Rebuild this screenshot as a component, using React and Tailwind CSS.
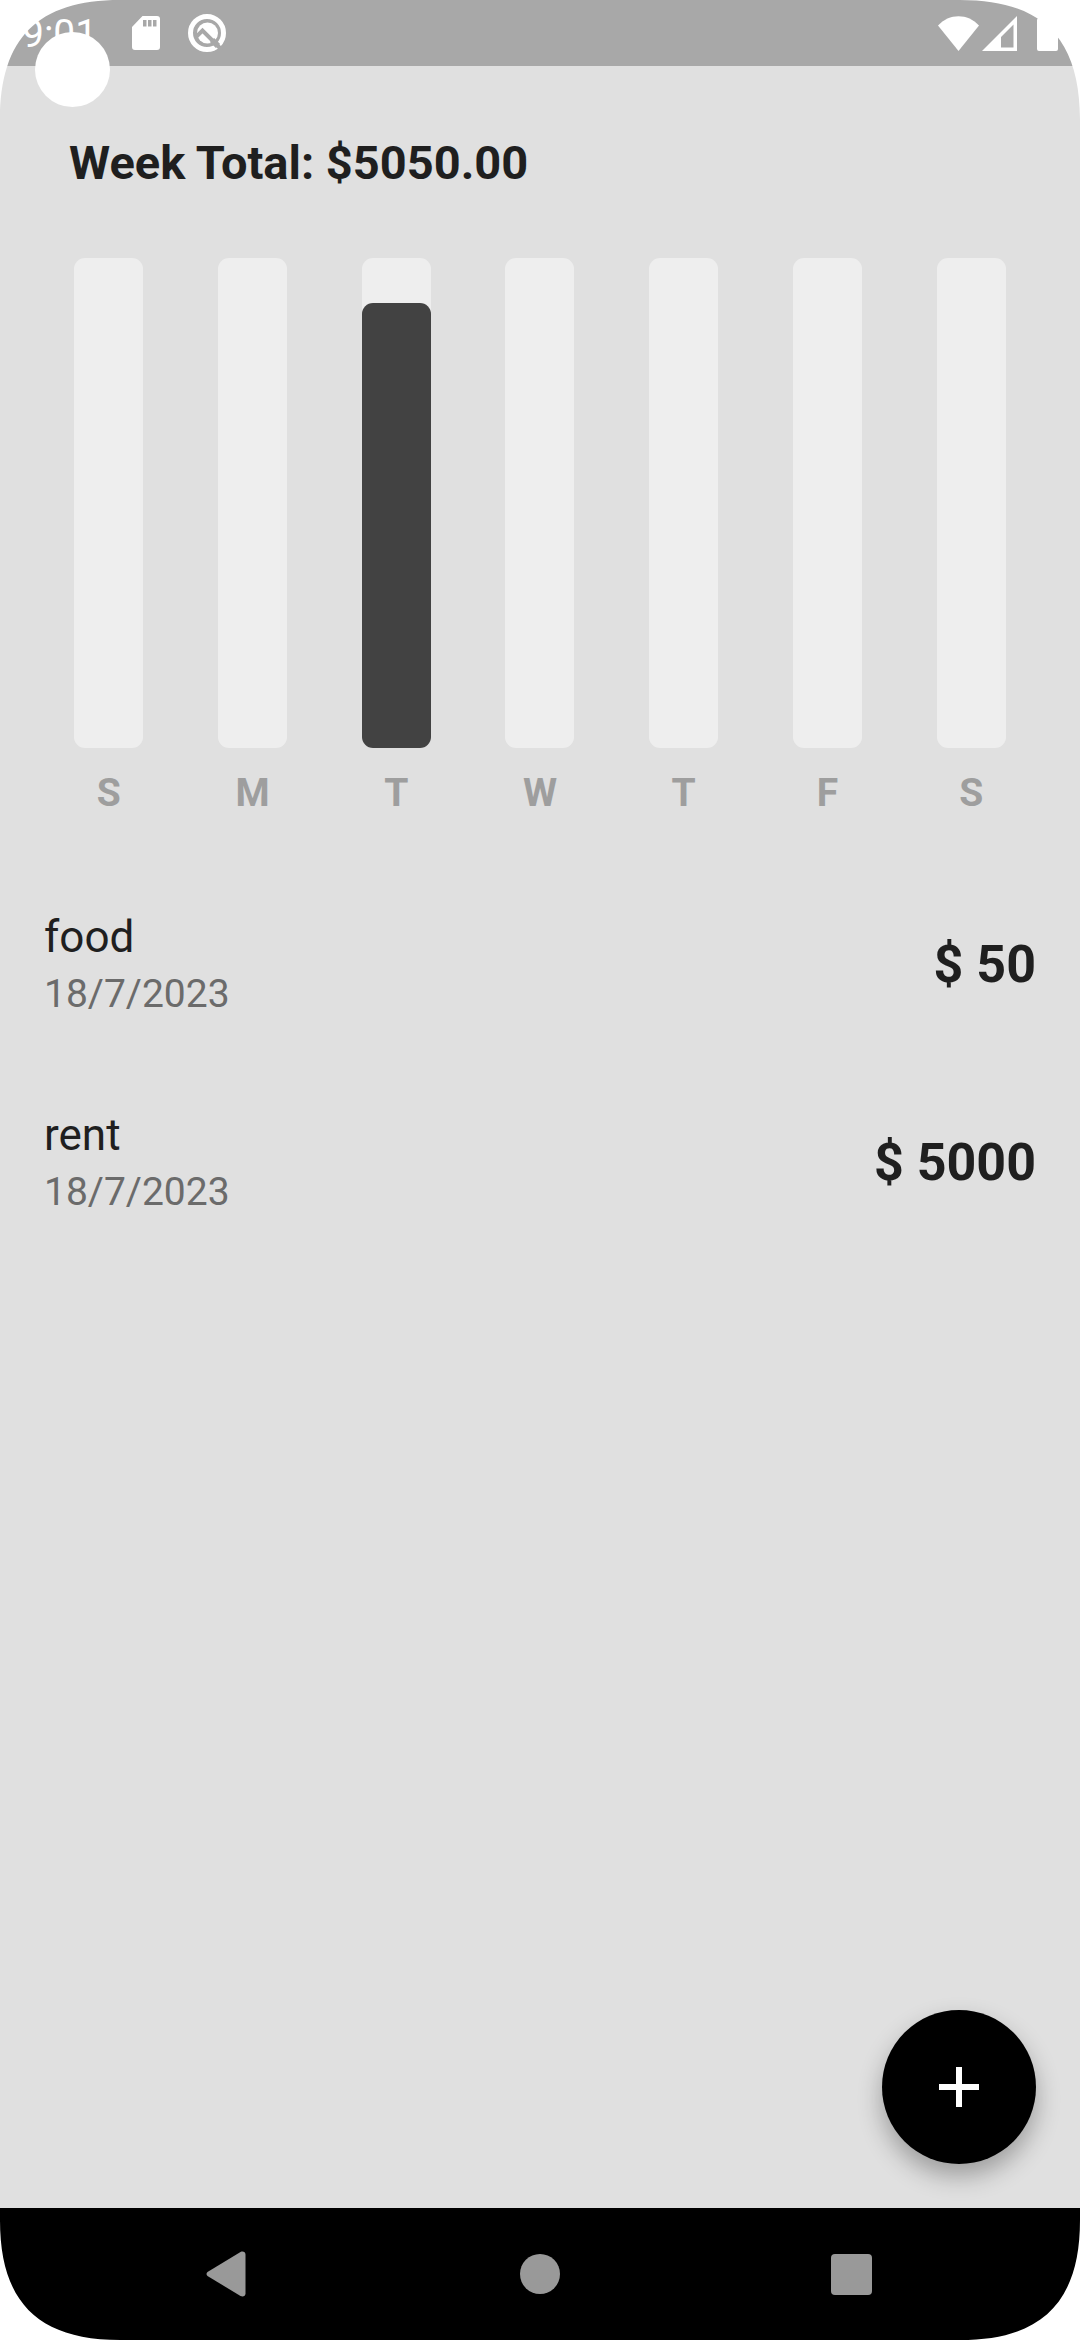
const days = [
  { label: "S", name: "Sunday", spent: 0 },
  { label: "M", name: "Monday", spent: 0 },
  { label: "T", name: "Tuesday", spent: 5000 },
  { label: "W", name: "Wednesday", spent: 0 },
  { label: "T", name: "Thursday", spent: 0 },
  { label: "F", name: "Friday", spent: 0 },
  { label: "S", name: "Saturday", spent: 0 },
];
const DAY_LIMIT = 5500;

const expenses = [
  { title: "food", date: "18/7/2023", amount: "$ 50" },
  { title: "rent", date: "18/7/2023", amount: "$ 5000" },
];

function StatusBar() {
  return (
    <header className="flex h-[66px] items-center bg-[#a8a8a8] pr-[22px] pl-[22px] text-white">
      <span className="w-[110px] pt-[2px] text-[39px] leading-[46px]">9:01</span>
      <svg className="h-[34px] w-[28px]" viewBox="0 0 28 34" fill="currentColor" aria-hidden="true">
        <path fillRule="evenodd" d="M10.5 0H25a3 3 0 0 1 3 3V31a3 3 0 0 1-3 3H3a3 3 0 0 1-3-3V11ZM11 4V10.500H14.500V4ZM16 4V10.500H19.500V4ZM21 4V10.500H24.500V4Z" />
      </svg>
      <svg className="ml-[28px] h-[38px] w-[38px]" viewBox="0 0 38 38" fill="none" aria-hidden="true">
        <circle cx="19" cy="19" r="16.500" stroke="currentColor" strokeWidth="5" />
        <circle cx="19.500" cy="19" r="10.500" fill="currentColor" />
        <path d="M7.500 23.500L14.500 16.500L34 36" stroke="#a8a8a8" strokeWidth="4" />
        <path d="M24 26L30 32" stroke="#a8a8a8" strokeWidth="6" />
      </svg>
      <div className="ml-auto flex items-center">
        <svg className="h-[35px] w-[41px]" viewBox="0 0 41 35" fill="currentColor" aria-hidden="true">
          <path d="M20.500 35L0 9.500C11-3 30-3 41 9.500Z" />
        </svg>
        <svg className="ml-[3px] h-[35px] w-[35px]" viewBox="0 0 35 35" fill="currentColor" aria-hidden="true">
          <path fillRule="evenodd" d="M35 0V35H0ZM31.500 8.500L19 21V31.500H31.500Z" />
        </svg>
        <svg className="ml-[20px] h-[36px] w-[21px]" viewBox="0 0 21 36" fill="currentColor" aria-hidden="true">
          <path d="M6 0H15V3H19a2 2 0 0 1 2 2V34a2 2 0 0 1-2 2H2a2 2 0 0 1-2-2V5a2 2 0 0 1 2-2H6Z" />
        </svg>
      </div>
    </header>
  );
}

function WeekChart() {
  return (
    <section className="px-[37px] pt-[69px]">
      <h1 className="pl-[32px] text-[47px] leading-[55px] font-bold">Week Total: $5050.00</h1>
      <ul className="mt-[68px] grid grid-cols-7">
        {days.map((day) => (
          <li key={day.name} className="flex flex-col items-center gap-[22px]">
            <div className="flex h-[490px] w-[69px] items-end rounded-[11px] bg-[#eeeeee]">
              <div
                className="w-full rounded-[11px] bg-[#424242]"
                style={{ height: `${(day.spent / DAY_LIMIT) * 100}%` }}
              />
            </div>
            <span className="text-[39px] leading-[46px] font-bold text-[#9e9e9e]">{day.label}</span>
          </li>
        ))}
      </ul>
    </section>
  );
}

function ExpenseList() {
  return (
    <ul className="mt-[49px]">
      {expenses.map((item) => (
        <li key={item.title} className="flex h-[198px] items-center justify-between px-[44px]">
          <div className="flex flex-col gap-[8px]">
            <span className="text-[44px] leading-[52px]">{item.title}</span>
            <span className="text-[39px] leading-[46px] text-[#6b6b6b]">{item.date}</span>
          </div>
          <span className="text-[52px] leading-[61px] font-bold">{item.amount}</span>
        </li>
      ))}
    </ul>
  );
}

function NavBar() {
  return (
    <nav className="flex h-[132px] items-center justify-center gap-[211px] bg-black text-[#999999]">
      <button type="button" aria-label="Back" className="flex h-[100px] w-[100px] items-center justify-center">
        <svg className="h-[46px] w-[46px]" viewBox="0 0 46 46" fill="currentColor" aria-hidden="true">
          <path d="M1.500 21L34.500 1C37 -.200 39.500 1 39.500 3.500V42.500C39.500 45 37 46.200 34.500 45L1.500 25Q-.500 23 1.500 21Z" />
        </svg>
      </button>
      <button type="button" aria-label="Home" className="flex h-[100px] w-[100px] items-center justify-center">
        <span className="h-[40px] w-[40px] rounded-full bg-[#999999]" />
      </button>
      <button type="button" aria-label="Recent apps" className="flex h-[100px] w-[100px] items-center justify-center">
        <span className="h-[41px] w-[41px] rounded-[4px] bg-[#999999]" />
      </button>
    </nav>
  );
}

function ScreenCorner({ className }) {
  return (
    <svg className={`pointer-events-none absolute h-[120px] w-[120px] ${className}`} viewBox="0 0 120 120" fill="#fff" aria-hidden="true">
      <path d="M0 0H120C38 0 0 38 0 120Z" />
    </svg>
  );
}

export default function App() {
  return (
    <div className="relative flex min-h-screen flex-col overflow-hidden bg-[#e0e0e0] font-[Roboto,sans-serif] text-[#1f1f1f]">
      <StatusBar />
      <main className="relative flex-1">
        <WeekChart />
        <ExpenseList />
        <button
          type="button"
          aria-label="Add expense"
          className="absolute right-[44px] bottom-[44px] flex h-[154px] w-[154px] items-center justify-center rounded-full bg-black text-white shadow-[0_12px_24px_rgba(0,0,0,0.3)]"
        >
          <svg className="h-[40px] w-[40px]" viewBox="0 0 40 40" stroke="currentColor" strokeWidth="6" aria-hidden="true">
            <path d="M20 0V40M0 20H40" />
          </svg>
        </button>
      </main>
      <NavBar />
      <div className="pointer-events-none absolute top-[32px] left-[35px] h-[75px] w-[75px] rounded-full bg-white" />
      <ScreenCorner className="top-0 left-0" />
      <ScreenCorner className="top-0 right-0 rotate-90" />
      <ScreenCorner className="right-0 bottom-0 rotate-180" />
      <ScreenCorner className="bottom-0 left-0 -rotate-90" />
    </div>
  );
}
